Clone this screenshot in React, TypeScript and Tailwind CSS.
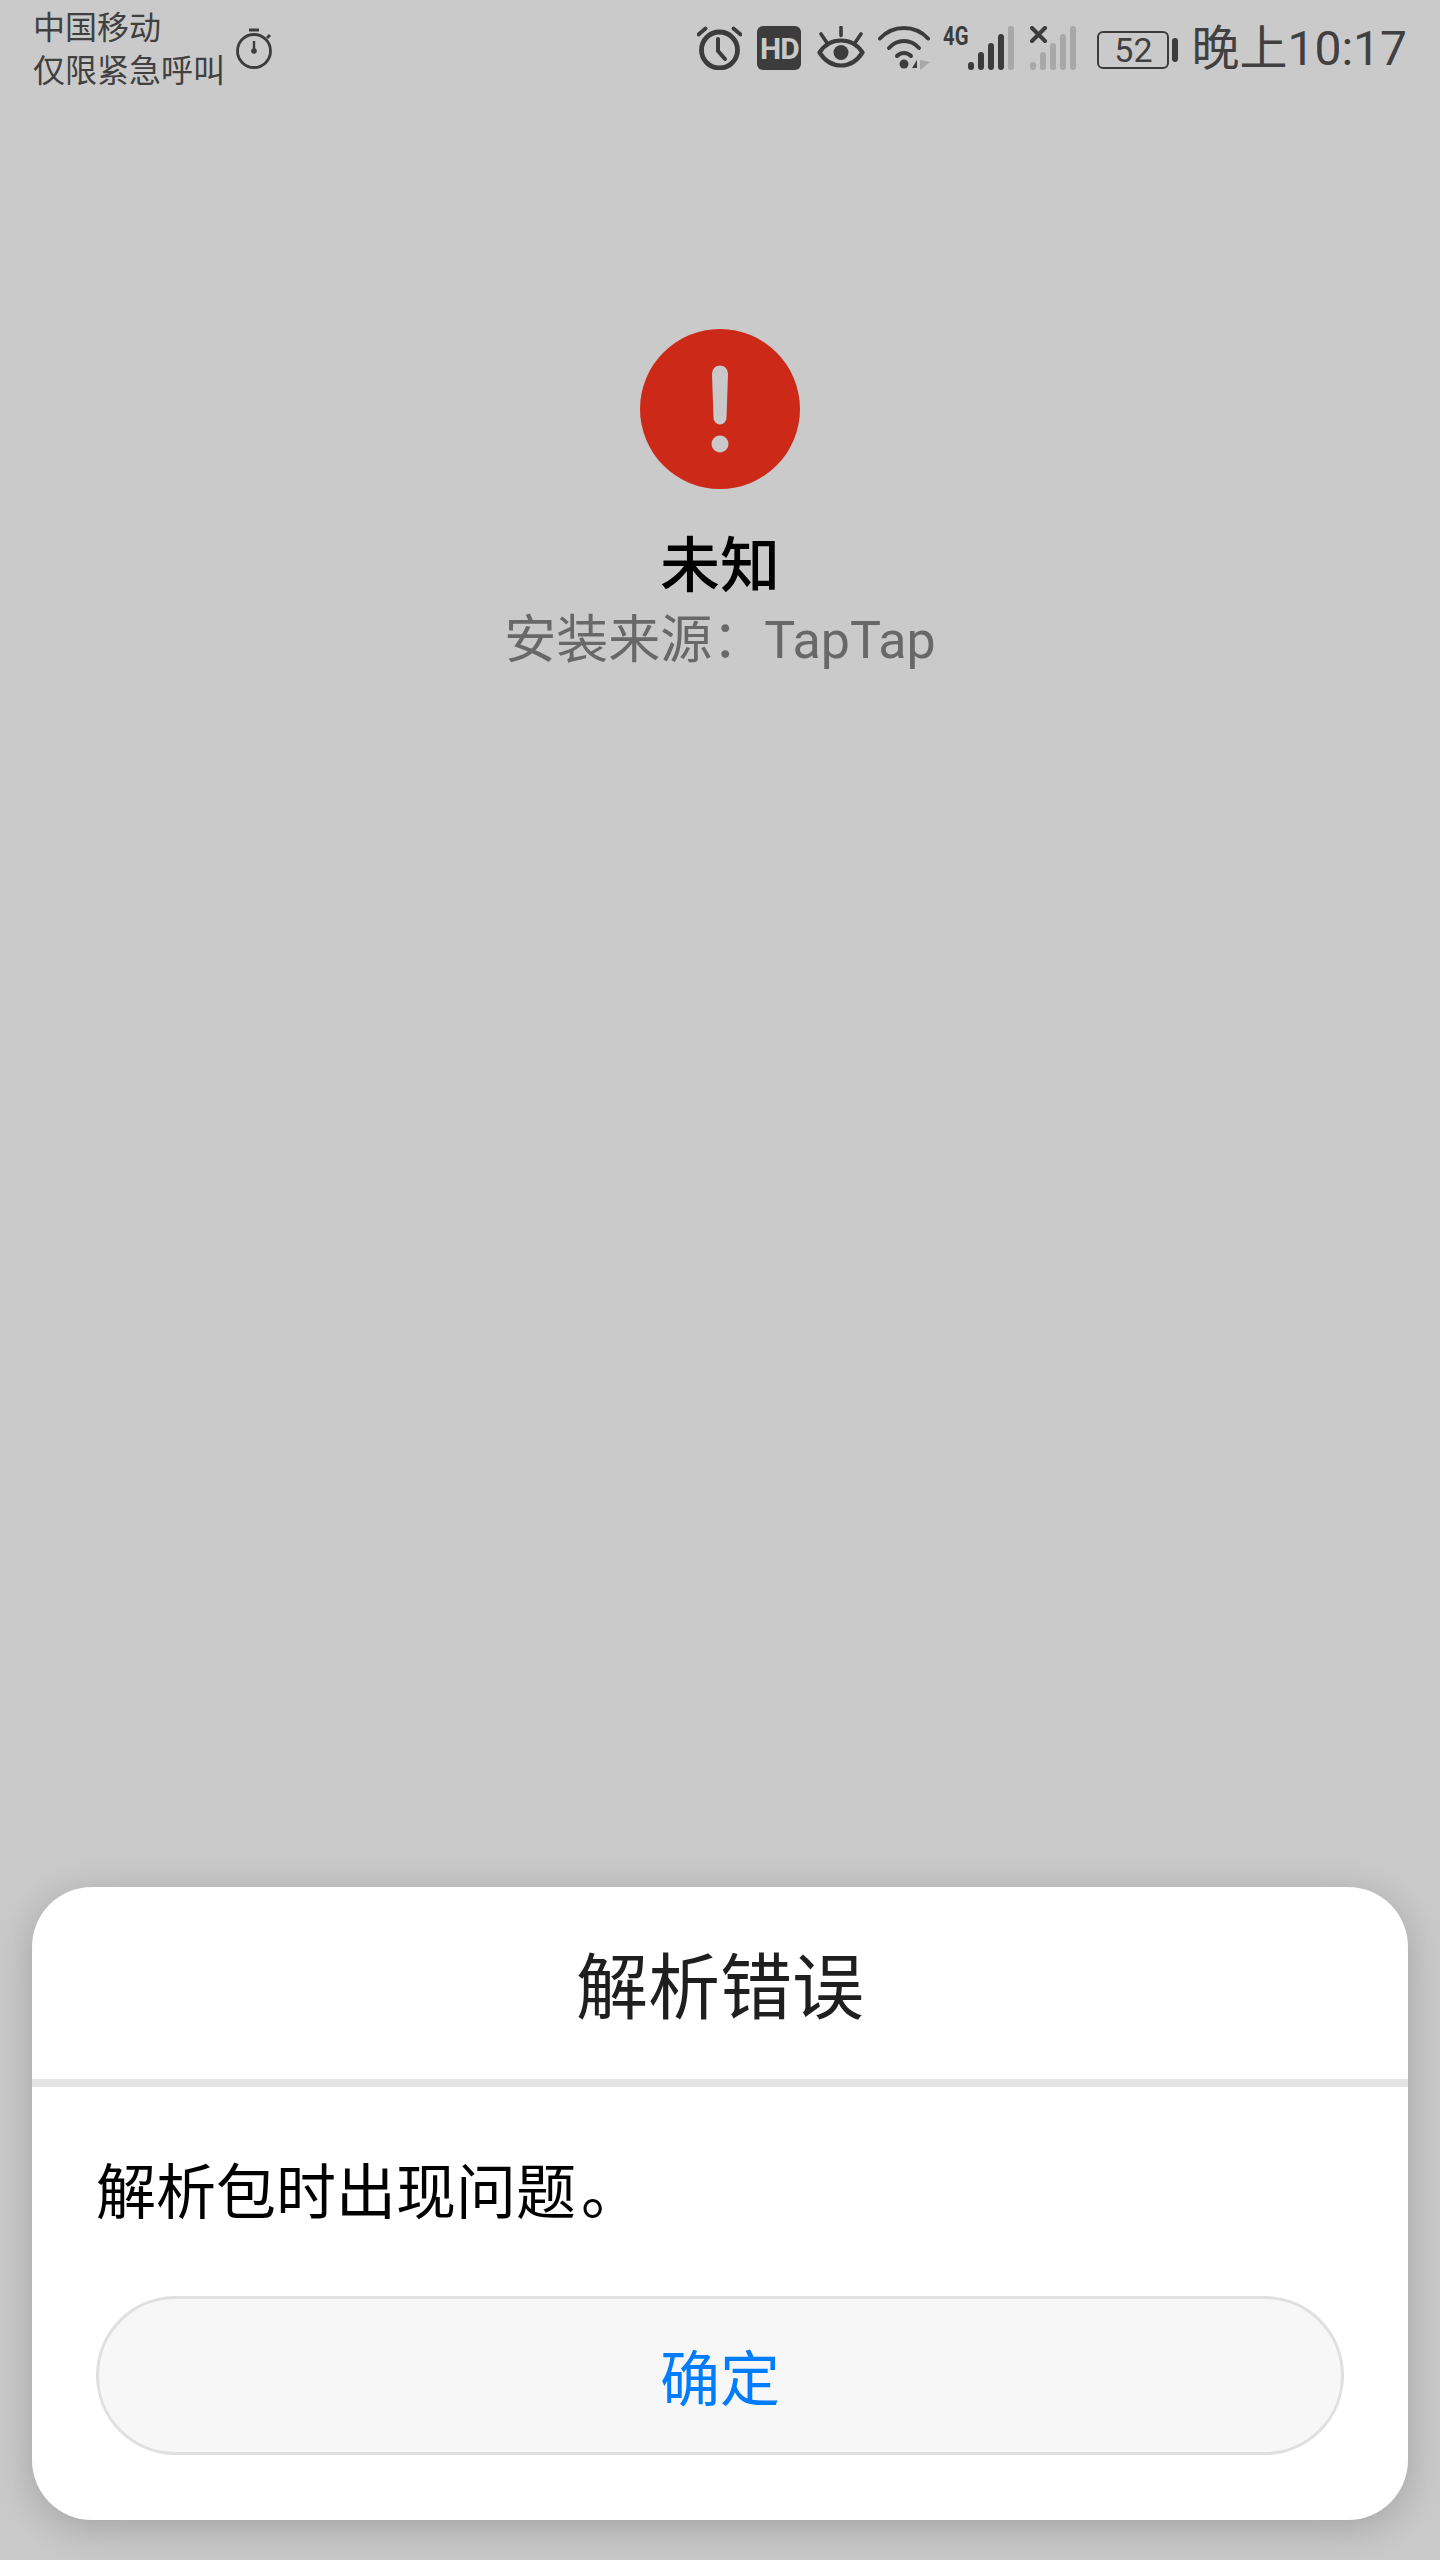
const font = { fontFamily: "Roboto, 'Noto Sans CJK SC', sans-serif" };

function Stopwatch() {
  return (
    <svg width="38" height="42" viewBox="0 0 38 42" className="ml-[11px] mt-[-2px]" fill="none" stroke="#3c3c3c">
      <circle cx="18" cy="23" r="16.500" strokeWidth="2.800" />
      <path d="M13 2h10" strokeWidth="3" />
      <path d="M31 10l3-3" strokeWidth="2.800" />
      <path d="M18 13v10" strokeWidth="2.400" />
      <circle cx="18" cy="23" r="2.800" fill="#3c3c3c" stroke="none" />
    </svg>
  );
}

function AlarmIcon() {
  return (
    <svg width="45" height="44" viewBox="0 0 45 44" fill="none" stroke="#3c3c3c" strokeLinecap="round">
      <circle cx="22.500" cy="24" r="18" strokeWidth="4.800" />
      <path d="M21 13v12l7 8" strokeWidth="4" strokeLinejoin="round" />
      <path d="M1.500 8.500L8.500 2.500M36.500 2.500l7 6" strokeWidth="3.800" />
    </svg>
  );
}

function EyeIcon() {
  return (
    <svg width="48" height="42" viewBox="0 0 48 42" fill="none" stroke="#3c3c3c" strokeLinecap="round">
      <path d="M2.500 26.500C8 18 15 14.500 24 14.500s16 3.500 21.500 12C40 35 33 39.500 24 39.500S8 35 2.500 26.500Z" strokeWidth="4.200" strokeLinejoin="round" />
      <circle cx="24" cy="26.500" r="7.500" fill="#3c3c3c" stroke="none" />
      <path d="M24 1.500v8M4 8l5.500 8M44 8l-5.500 8" strokeWidth="3.600" />
    </svg>
  );
}

function WifiIcon() {
  return (
    <svg width="54" height="44" viewBox="0 0 54 44" fill="none" strokeLinecap="round">
      <path d="M2 12.500C8.500 5.500 17 2 26 2s17.500 3.500 24 10.500" stroke="#3c3c3c" strokeWidth="4" />
      <path d="M11 22c4-4.500 9.500-7 15-7s11 2.500 15 7" stroke="#3c3c3c" strokeWidth="4" />
      <path d="M19 30c2-2 4.500-3 7-3s5 1 7 3" stroke="#3c3c3c" strokeWidth="4" />
      <circle cx="26" cy="38" r="4.500" fill="#3c3c3c" />
      <path d="M39 34v8h-5z" fill="#3c3c3c" />
      <path d="M42 34l10 2-10 8z" fill="#a8a8a8" />
    </svg>
  );
}

function SignalIcon() {
  return (
    <div className="relative h-[44px] w-[71px]">
      <svg width="71" height="44" viewBox="0 0 71 44">
        <rect x="25" y="36" width="6" height="8" rx="3" fill="#3c3c3c" />
        <rect x="35" y="26" width="6" height="18" rx="3" fill="#3c3c3c" />
        <rect x="45" y="17" width="6" height="27" rx="3" fill="#3c3c3c" />
        <rect x="55" y="8" width="6" height="36" rx="3" fill="#3c3c3c" />
        <rect x="65" y="0" width="6" height="44" rx="3" fill="#a8a8a8" />
      </svg>
      <span className="absolute left-0 top-[-3px] origin-left scale-x-[0.78] text-[26px] leading-none font-bold text-[#3c3c3c]">4G</span>
    </div>
  );
}

function NoSimIcon() {
  return (
    <svg width="48" height="44" viewBox="0 0 48 44">
      <path d="M2 2l13 13M15 2L2 15" stroke="#3c3c3c" strokeWidth="4" strokeLinecap="round" />
      <rect x="0" y="36" width="6" height="8" rx="3" fill="#a8a8a8" />
      <rect x="10" y="26" width="6" height="18" rx="3" fill="#a8a8a8" />
      <rect x="20" y="17" width="6" height="27" rx="3" fill="#a8a8a8" />
      <rect x="30" y="8" width="6" height="36" rx="3" fill="#a8a8a8" />
      <rect x="40" y="0" width="6" height="44" rx="3" fill="#a8a8a8" />
    </svg>
  );
}

function StatusBar() {
  return (
    <div className="flex justify-between pt-[7px] pl-[33px] pr-[33px] h-[100px] text-[#404040]">
      <div className="flex items-center self-start">
        <div className="flex flex-col text-[32px] leading-[43px]">
          <span>中国移动</span>
          <span>仅限紧急呼叫</span>
        </div>
        <Stopwatch />
      </div>
      <div className="flex items-start pt-[19px]">
        <AlarmIcon />
        <div className="ml-[15px] flex h-[44px] w-[44px] items-center justify-center rounded-[6px] bg-[#3c3c3c] text-[30px] font-bold tracking-[-1px] text-[#c9c9c9]">
          HD
        </div>
        <div className="ml-[16px]"><EyeIcon /></div>
        <div className="ml-[13px]"><WifiIcon /></div>
        <div className="ml-[11px]"><SignalIcon /></div>
        <div className="ml-[16px]"><NoSimIcon /></div>
        <div className="ml-[19px] mt-[5px] flex h-[38px] w-[72px] items-center justify-center rounded-[6px] border-2 border-[#3c3c3c] text-[34px] leading-none">
          52
        </div>
        <div className="ml-[3px] mt-[12px] h-[24px] w-[6px] rounded-[3px] bg-[#3c3c3c]" />
        <span className="ml-[13px] mt-[-9px] text-[48px] leading-[64px] whitespace-nowrap">晚上10:17</span>
      </div>
    </div>
  );
}

function AppInfo() {
  return (
    <div className="flex flex-col items-center pt-[229px]">
      <div className="flex h-[160px] w-[160px] items-center justify-center rounded-full bg-[#cc2919]">
        <svg width="18" height="88" viewBox="0 0 18 88" fill="#c9c9c9">
          <path d="M1 8.500a8 8 0 0 1 16 0L15.500 53a6.500 6.500 0 0 1-13 0Z" />
          <circle cx="9" cy="79" r="8.500" />
        </svg>
      </div>
      <div className="mt-[42px] text-[60px] leading-[72px] font-medium text-black">未知</div>
      <div className="mt-[1px] text-[52px] leading-[74px] text-[#686868]">安装来源：TapTap</div>
    </div>
  );
}

function ErrorDialog() {
  return (
    <div className="mx-[32px] mb-[40px] mt-auto rounded-[60px] bg-white shadow-[0_8px_40px_rgba(0,0,0,0.2)]">
      <div className="flex h-[192px] items-center justify-center pt-[12px] text-[72px] text-[#1f1f1f]">解析错误</div>
      <div className="h-[8px] bg-[#e5e5e5]" />
      <div className="px-[64px] pt-[63px] pb-[65px]">
        <p className="text-[60px] leading-[88px] text-black">
          解析包时出现问题<span className="ml-[5px]">。</span>
        </p>
        <button className="mt-[58px] flex h-[159px] w-full items-center justify-center rounded-full border-[3px] border-[#e0e0e0] bg-[#f7f7f7] pt-[10px] text-[60px] text-[#007dff]">
          确定
        </button>
      </div>
    </div>
  );
}

export default function App() {
  return (
    <div className="flex h-[2560px] w-[1440px] flex-col bg-[#cacaca]" style={font}>
      <StatusBar />
      <AppInfo />
      <ErrorDialog />
    </div>
  );
}
